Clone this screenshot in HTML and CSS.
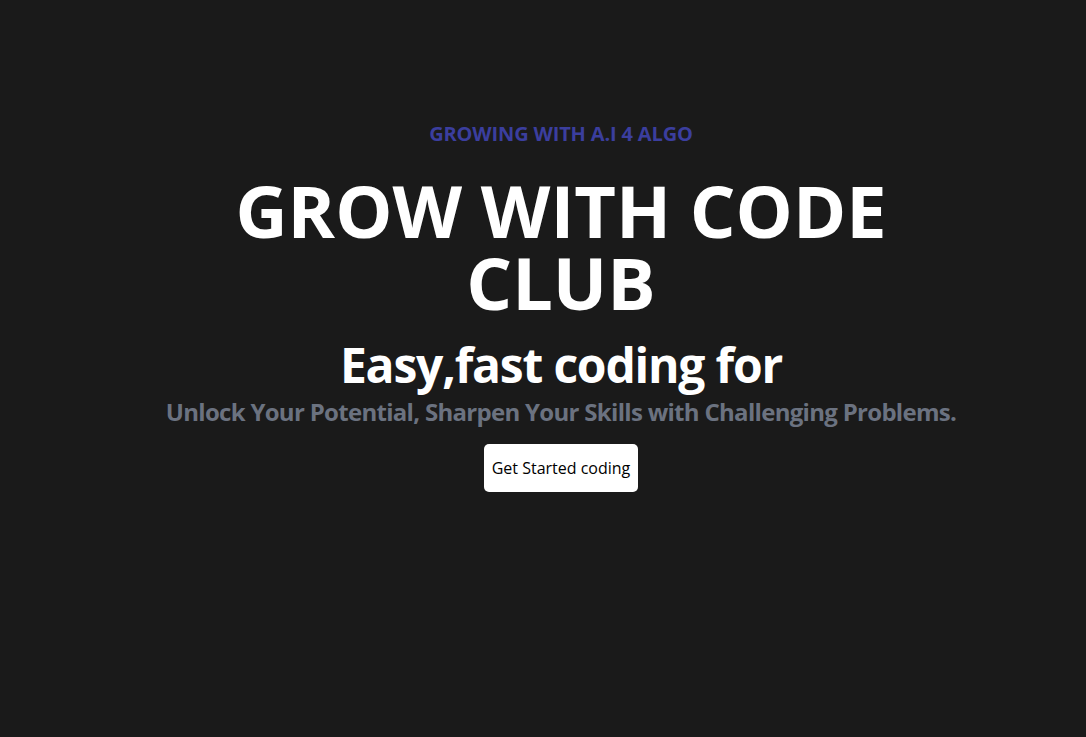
FILE: index.html
```html
<!DOCTYPE html>
<html lang="en">
<head>
<meta charset="utf-8">
<title>Grow With Code Club</title>
<link rel="stylesheet" href="styles.css">
</head>
<body>
<main class="hero">
  <p class="tagline">GROWING WITH A.I 4 ALGO</p>
  <h1 class="title">GROW WITH CODE<br>CLUB</h1>
  <h2 class="subtitle">Easy,fast coding for</h2>
  <p class="lead">Unlock Your Potential, Sharpen Your Skills with Challenging Problems.</p>
  <button class="cta">Get Started coding</button>
</main>
</body>
</html>
```
FILE: styles.css
```css
html, body {
  margin: 0;
  padding: 0;
  background: #1a1a1a;
  height: 100%;
}
body {
  font-family: "Open Sans", "Noto Sans", sans-serif;
  color: #ffffff;
}
.hero {
  display: flex;
  flex-direction: column;
  align-items: center;
  text-align: center;
  padding-top: 120px;
  padding-left: 36px;
}
.tagline {
  margin: 0;
  font-size: 20px;
  line-height: 28px;
  font-weight: 700;
  letter-spacing: -0.15px;
  color: #3b3e9e;
}
.title {
  margin: 26px 0 0;
  font-size: 72px;
  line-height: 72px;
  font-weight: 700;
  width: 760px;
}
.subtitle {
  margin: 23px 0 0;
  font-size: 48px;
  line-height: 48px;
  font-weight: 700;
  letter-spacing: -1.2px;
}
.lead {
  margin: 7px 0 0;
  font-size: 24px;
  line-height: 32px;
  font-weight: 700;
  letter-spacing: -0.7px;
  color: #6b7280;
}
.cta {
  margin-top: 16px;
  font-family: inherit;
  font-size: 16px;
  line-height: 24px;
  padding: 12px 8px;
  background: #ffffff;
  color: #000000;
  border: none;
  border-radius: 5px;
}
```
